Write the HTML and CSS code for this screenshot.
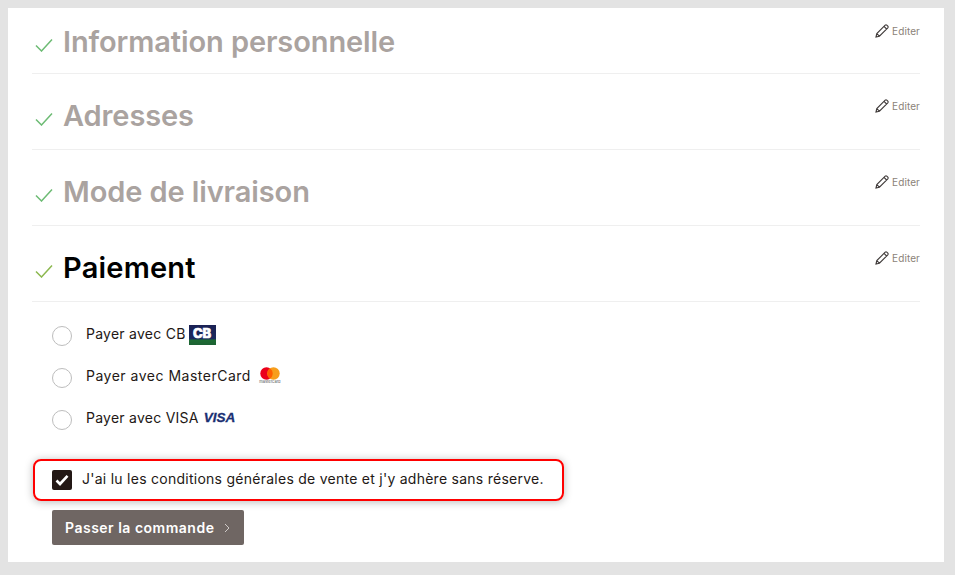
FILE: index.html
```html
<!DOCTYPE html>
<html lang="fr">
<head>
    <meta charset="UTF-8">
    <meta name="viewport" content="width=device-width, initial-scale=1.0">
    <title>Paiement</title>
    <link rel="stylesheet" href="styles.css">
</head>
<body>
    <main class="checkout">
        <section class="step step-first step-done">
            <svg class="step-check" viewBox="0 0 18 14"><path d="M1 7.5 L6.5 13 L17 1.5"/></svg>
            <h2 class="step-title">Information personnelle</h2>
            <a class="step-edit" href="#">
                <svg class="pencil" viewBox="0 0 14 14"><path d="M1 13 L1.8 9.6 L10.2 1.2 Q11 .5 11.8 1.2 L12.8 2.2 Q13.5 3 12.8 3.8 L4.4 12.2 Z M1.8 9.6 L4.4 12.2 M9 2.4 L11.6 5"/></svg>
                Editer
            </a>
        </section>
        <section class="step step-done">
            <svg class="step-check" viewBox="0 0 18 14"><path d="M1 7.5 L6.5 13 L17 1.5"/></svg>
            <h2 class="step-title">Adresses</h2>
            <a class="step-edit" href="#">
                <svg class="pencil" viewBox="0 0 14 14"><path d="M1 13 L1.8 9.6 L10.2 1.2 Q11 .5 11.8 1.2 L12.8 2.2 Q13.5 3 12.8 3.8 L4.4 12.2 Z M1.8 9.6 L4.4 12.2 M9 2.4 L11.6 5"/></svg>
                Editer
            </a>
        </section>
        <section class="step step-done">
            <svg class="step-check" viewBox="0 0 18 14"><path d="M1 7.5 L6.5 13 L17 1.5"/></svg>
            <h2 class="step-title">Mode de livraison</h2>
            <a class="step-edit" href="#">
                <svg class="pencil" viewBox="0 0 14 14"><path d="M1 13 L1.8 9.6 L10.2 1.2 Q11 .5 11.8 1.2 L12.8 2.2 Q13.5 3 12.8 3.8 L4.4 12.2 Z M1.8 9.6 L4.4 12.2 M9 2.4 L11.6 5"/></svg>
                Editer
            </a>
        </section>
        <section class="step step-current">
            <svg class="step-check" viewBox="0 0 18 14"><path d="M1 7.5 L6.5 13 L17 1.5"/></svg>
            <h2 class="step-title">Paiement</h2>
            <a class="step-edit" href="#">
                <svg class="pencil" viewBox="0 0 14 14"><path d="M1 13 L1.8 9.6 L10.2 1.2 Q11 .5 11.8 1.2 L12.8 2.2 Q13.5 3 12.8 3.8 L4.4 12.2 Z M1.8 9.6 L4.4 12.2 M9 2.4 L11.6 5"/></svg>
                Editer
            </a>
        </section>

        <div class="pay-options">
            <label class="pay-option">
                <span class="radio"></span>
                <span class="pay-label pay-label-short">Payer avec CB</span>
                <span class="logo-cb"><span class="logo-cb-text">CB</span></span>
            </label>
            <label class="pay-option">
                <span class="radio"></span>
                <span class="pay-label">Payer avec MasterCard</span>
                <span class="logo-mc">
                    <svg class="logo-mc-rings" viewBox="0 0 20 13">
                        <circle cx="6.5" cy="6.5" r="6.2" fill="#eb001b"/>
                        <circle cx="13.5" cy="6.5" r="6.2" fill="#f79e1b"/>
                        <path d="M10 1.4 A6.2 6.2 0 0 1 10 11.6 A6.2 6.2 0 0 1 10 1.4" fill="#ff5f00"/>
                    </svg>
                    <span class="logo-mc-text">mastercard</span>
                </span>
            </label>
            <label class="pay-option">
                <span class="radio"></span>
                <span class="pay-label pay-label-short">Payer avec VISA</span>
                <span class="logo-visa">VISA</span>
            </label>
        </div>

        <label class="terms">
            <span class="terms-box">
                <svg viewBox="0 0 14 12"><path d="M1.5 6.5 L5 10 L12.5 1.8"/></svg>
            </span>
            <span class="terms-text">J'ai lu les conditions générales de vente et j'y adhère sans réserve.</span>
        </label>

        <button class="order-btn" type="button">
            Passer la commande
            <svg class="order-chevron" viewBox="0 0 6 10"><path d="M1 1 L5 5 L1 9"/></svg>
        </button>
    </main>
</body>
</html>
```

FILE: styles.css
```css
* {
    box-sizing: border-box;
}
body {
    font-family: "Inter", "Liberation Sans", sans-serif;
    background: #e3e3e3;
    color: #231815;
    margin: 8px 11px 8px 8px;
}
.checkout {
    background: #ffffff;
    height: 554px;
    padding: 0 24px;
}
.step {
    display: flex;
    align-items: center;
    height: 76px;
    padding-top: 8px;
    border-bottom: 1px solid #efefef;
}
.step-first {
    height: 66px;
    padding-top: 2px;
}
.step-check {
    width: 18px;
    height: 14px;
    margin: 6px 10px 0 3px;
    flex: none;
    fill: none;
    stroke: #6dbb74;
    stroke-width: 1.5;
}
.step-title {
    margin: 0;
    font-size: 29px;
    font-weight: 600;
    letter-spacing: -0.1px;
    color: #aaa3a0;
}
.step-current .step-title {
    color: #000000;
    letter-spacing: 0.2px;
}
.step-current .step-check {
    stroke: #8cb84f;
}
.step-edit {
    display: flex;
    align-items: center;
    gap: 3px;
    align-self: flex-start;
    margin: 17px 0 0 auto;
    font-size: 10px;
    letter-spacing: 0.1px;
    color: #8a8278;
    text-decoration: none;
}
.step-first .step-edit {
    margin-top: 14px;
}
.pencil {
    width: 14px;
    height: 14px;
    fill: none;
    stroke: #3f3a39;
    stroke-width: 1.1;
}
.pay-options {
    display: flex;
    flex-direction: column;
    gap: 22px;
    padding: 22px 0 0 20px;
}
.pay-option {
    display: flex;
    align-items: center;
    height: 20px;
    font-size: 14px;
    letter-spacing: 0.5px;
}
.radio {
    width: 20px;
    height: 20px;
    margin: 3px 14px 0 0;
    border: 1.5px solid #bdbdbd;
    border-radius: 50%;
    flex: none;
}
.pay-label {
    margin-top: -2px;
}
.pay-label-short {
    letter-spacing: 0.25px;
}
.logo-cb {
    display: flex;
    align-items: center;
    justify-content: center;
    width: 27px;
    height: 20px;
    margin: 1px 0 0 3px;
    background: linear-gradient(#1b2154 0, #1b2a5e 68%, #1d6b33 76%, #1d6133 100%);
}
.logo-cb-text {
    margin-top: -3px;
    font-size: 13px;
    line-height: 13px;
    font-weight: 800;
    letter-spacing: 0;
    color: #ffffff;
    -webkit-text-stroke: 0.7px #ffffff;
}
.logo-mc {
    display: flex;
    flex-direction: column;
    align-items: center;
    width: 20px;
    margin: -2px 0 0 9px;
}
.logo-mc-rings {
    width: 20px;
    height: 13px;
}
.logo-mc-text {
    font-size: 4px;
    line-height: 4px;
    letter-spacing: 0;
    color: #555555;
}
.logo-visa {
    margin: -1px 0 0 5px;
    font-family: "Liberation Sans", sans-serif;
    font-size: 13.5px;
    font-weight: 700;
    font-style: italic;
    letter-spacing: 0;
    color: #1a2f73;
    -webkit-text-stroke: 0.3px #1a2f73;
}
.terms {
    display: flex;
    align-items: center;
    width: 531px;
    height: 42px;
    margin: 31px 0 0 1px;
    padding: 0 0 0 17px;
    border: 2px solid #ff0000;
    border-radius: 8px;
    box-shadow: 0 1px 9px rgba(0, 0, 0, 0.28);
    font-size: 14px;
}
.terms-box {
    display: flex;
    align-items: center;
    justify-content: center;
    width: 20px;
    height: 20px;
    margin-right: 10px;
    background: #231815;
    border-radius: 2px;
    flex: none;
}
.terms-box svg {
    width: 14px;
    height: 12px;
    fill: none;
    stroke: #ffffff;
    stroke-width: 2.6;
}
.terms-text {
    margin-top: -3px;
    letter-spacing: 0.26px;
}
.order-btn {
    display: flex;
    align-items: center;
    justify-content: space-between;
    width: 192px;
    height: 35px;
    margin: 9px 0 0 20px;
    padding: 0 14px 0 13px;
    background: #6f6663;
    border: none;
    border-radius: 2px;
    font-family: inherit;
    font-size: 14px;
    font-weight: 600;
    letter-spacing: 0.5px;
    color: #ffffff;
}
.order-chevron {
    width: 6px;
    height: 10px;
    fill: none;
    stroke: #cfcac8;
    stroke-width: 1;
}
```
